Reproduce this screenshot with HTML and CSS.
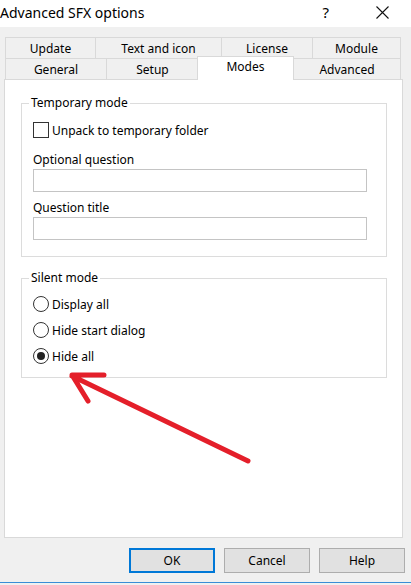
FILE: index.html
```html
<!DOCTYPE html>
<html lang="en">
<head>
<meta charset="utf-8">
<title>Advanced SFX options</title>
<link rel="stylesheet" href="styles.css">
</head>
<body>
<div class="window">
  <header class="titlebar">
    <span class="title">Advanced SFX options</span>
    <span class="help">?</span>
    <svg class="close" width="13" height="13" viewBox="0 0 13 13"><path d="M0.5 0.5 L12.5 12.5 M12.5 0.5 L0.5 12.5" stroke="#111" stroke-width="1.1" fill="none"/></svg>
  </header>

  <nav class="tabs">
    <div class="tabrow">
      <div class="tab t-update">Update</div>
      <div class="tab t-text">Text and icon</div>
      <div class="tab t-license">License</div>
      <div class="tab t-module last">Module</div>
    </div>
    <div class="tabrow">
      <div class="tab t-general">General</div>
      <div class="tab t-setup">Setup</div>
      <div class="tab t-modes selected">Modes</div>
      <div class="tab t-advanced last">Advanced</div>
    </div>
  </nav>

  <main class="panel">
    <fieldset class="group group-temp">
      <legend>Temporary mode</legend>
      <div class="check-row"><span class="checkbox"></span><span>Unpack to temporary folder</span></div>
      <div class="field-label">Optional question</div>
      <div class="textbox"></div>
      <div class="field-label">Question title</div>
      <div class="textbox"></div>
    </fieldset>

    <fieldset class="group group-silent">
      <legend>Silent mode</legend>
      <div class="radio-row"><span class="radio"></span><span>Display all</span></div>
      <div class="radio-row"><span class="radio"></span><span>Hide start dialog</span></div>
      <div class="radio-row"><span class="radio checked"></span><span>Hide all</span></div>
    </fieldset>
  </main>

  <footer class="buttons">
    <button class="btn default">OK</button>
    <button class="btn">Cancel</button>
    <button class="btn">Help</button>
  </footer>
  <div class="bottom-edge"></div>

  <svg class="arrow" width="411" height="585" viewBox="0 0 411 585">
    <path d="M248 461 L72 376 M104 375 L72 375 L88 401" stroke="#e41f2a" stroke-width="5" stroke-linecap="round" stroke-linejoin="round" fill="none"/>
  </svg>
</div>
</body>
</html>
```

FILE: styles.css
```css
* { box-sizing: border-box; }

html, body {
  margin: 0;
  padding: 0;
}

body {
  background: #f0f0f0;
  font-family: "Noto Sans", "Open Sans", sans-serif;
  font-size: 12px;
  color: #000;
}

.window {
  position: relative;
  width: 411px;
  height: 585px;
  overflow: hidden;
  background: #f0f0f0;
}

/* Title bar */
.titlebar {
  height: 27px;
  background: #fff;
  display: flex;
  align-items: center;
  padding-bottom: 3px;
}

.title {
  font-size: 14px;
  margin-left: 0;
}

.help {
  margin-left: auto;
  font-size: 15px;
  margin-right: 47px;
}

.close {
  margin-right: 22px;
}

/* Tabs */
.tabs {
  padding-left: 5px;
  margin-top: 10px;
}

.tabrow {
  display: flex;
  height: 21px;
}

.tab {
  height: 21px;
  border-top: 1px solid #d9d9d9;
  border-left: 1px solid #d9d9d9;
  background: #f0f0f0;
  display: flex;
  align-items: center;
  justify-content: center;
  padding-bottom: 0;
}

.tab.last {
  border-right: 1px solid #d9d9d9;
}

.t-update { width: 90px; }
.t-text { width: 126px; }
.t-license { width: 91px; }
.t-module { width: 89px; }

.t-general { width: 101px; }
.t-setup { width: 92px; }
.t-modes { width: 97px; }
.t-advanced { width: 108px; margin-left: -1px; }

.tab.selected {
  position: relative;
  z-index: 2;
  margin-left: -1px;
  margin-top: -2px;
  height: 24px;
  background: #fff;
  border-right: 1px solid #d9d9d9;
  padding-bottom: 4px;
}

/* Panel */
.panel {
  margin-left: 4px;
  width: 399px;
  height: 459px;
  background: #fff;
  border: 1px solid #d9d9d9;
  padding: 15px 0 0 16px;
}

.group {
  width: 366px;
  margin: 0;
  padding: 0 0 0 11px;
  border: 1px solid #dcdcdc;
  min-width: 0;
}

.group legend {
  padding: 0 2px;
  margin-left: -4px;
  line-height: 16px;
}

.group-temp {
  height: 162px;
}

.group-silent {
  margin-top: 13px;
  height: 108px;
}

.check-row,
.radio-row {
  display: flex;
  align-items: center;
  height: 16px;
  gap: 3px;
}

.check-row {
  margin-top: 11px;
}

.checkbox {
  width: 16px;
  height: 16px;
  border: 1px solid #333;
  background: #fff;
}

.field-label {
  line-height: 16px;
  margin-top: 14px;
}

.check-row + .field-label {
  margin-top: 14px;
}

.textbox {
  margin-top: 1px;
  width: 334px;
  height: 23px;
  border: 1px solid #c4c4c4;
  background: #fff;
}

.textbox + .field-label {
  margin-top: 8px;
}

.radio-row {
  margin-top: 10px;
}

.radio-row + .radio-row {
  margin-top: 10px;
}

.radio {
  width: 16px;
  height: 16px;
  border: 1px solid #333;
  border-radius: 50%;
  background: #fff;
  display: flex;
  align-items: center;
  justify-content: center;
}

.radio.checked::after {
  content: "";
  width: 8px;
  height: 8px;
  border-radius: 50%;
  background: #222;
}

/* Buttons */
.buttons {
  display: flex;
  justify-content: flex-end;
  gap: 9px;
  padding-right: 6px;
  margin-top: 10px;
}

.btn {
  width: 86px;
  height: 25px;
  border: 1px solid #adadad;
  background: #e1e1e1;
  font-family: inherit;
  font-size: 12px;
  color: #000;
  padding: 0;
}

.btn.default {
  border: 2px solid #0078d7;
}

.bottom-edge {
  margin-top: 9px;
  height: 1px;
  background: #3a8dd6;
}

/* Annotation arrow */
.arrow {
  position: absolute;
  left: 0;
  top: 0;
  pointer-events: none;
}
```
